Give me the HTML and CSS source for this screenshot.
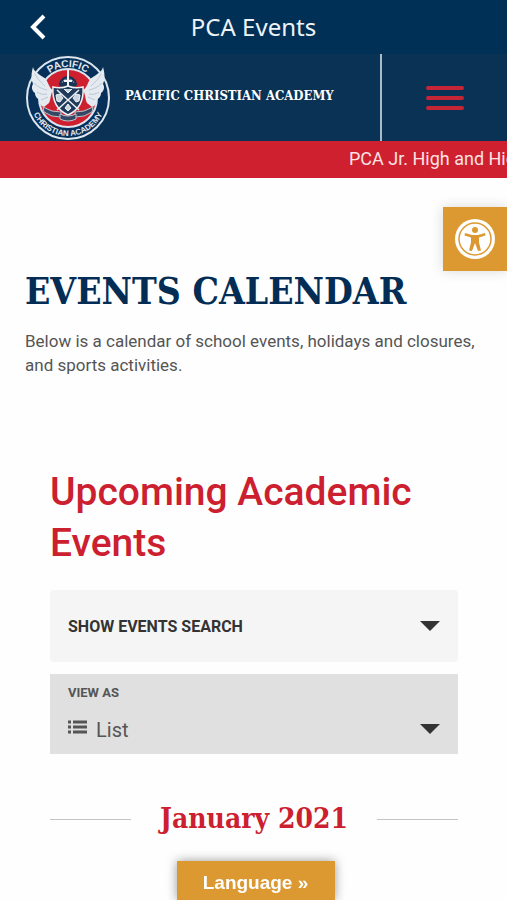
FILE: index.html
```html
<!DOCTYPE html>
<html lang="en">
<head>
  <meta charset="UTF-8">
  <title>PCA Events</title>
  <meta name="viewport" content="width=device-width, initial-scale=1.0">
  <link rel="stylesheet" href="styles.css">
</head>
<body>
  <div class="app-bar">
    <button class="back" type="button" aria-label="Back">
      <svg width="16" height="26" viewBox="0 0 16 26"><path d="M14 2 3 13l11 11" fill="none" stroke="#fff" stroke-width="4"/></svg>
    </button>
    <div class="app-title">PCA Events</div>
  </div>

  <header class="site-header">
    <a class="brand" href="#">
      <svg class="logo" viewBox="0 0 84 84" aria-hidden="true">
        <defs>
          <path id="arc-top" d="M11 42a31 31 0 0 1 62 0"/>
          <path id="arc-bottom" d="M4 42a38 38 0 0 0 76 0"/>
        </defs>
        <circle cx="42" cy="42" r="41" fill="#06305a" stroke="#dce6ef" stroke-width="2"/>
        <circle cx="42" cy="42" r="29" fill="#cf202f" stroke="#dce6ef" stroke-width="2"/>
        <text class="logo-text"><textPath href="#arc-top" startOffset="50%">PACIFIC</textPath></text>
        <text class="logo-text small"><textPath href="#arc-bottom" startOffset="50%">CHRISTIAN ACADEMY</textPath></text>
        <!-- wings -->
        <g id="wing">
          <path d="M7 11c-2 7-2 12 0 17-2 3-1 7 2 9 0 4 3 6 5 7-1 4 1 6 4 7l5-4c2-4 1-7 4-13-5-2-4-10-10-13C13 18 8 16 7 11Z" fill="#e4eaf0"/>
          <path d="M9 18c3 6 6 8 10 12M8 27c4 4 8 6 13 7M11 36c3 2 6 3 10 2M15 44l7-3" fill="none" stroke="#b9c8d6" stroke-width="1"/>
        </g>
        <use href="#wing" transform="matrix(-1 0 0 1 84 0)"/>
        <!-- helmet and sword -->
        <path d="M33 29c0-5 4-9 9-9s9 4 9 9l-3 3H36Z" fill="#183354"/>
        <path d="M36 27c1-3 3-4 6-4s5 1 6 4" fill="none" stroke="#8291a5" stroke-width="1"/>
        <path d="M42 14v18M38 25h8" stroke="#f2f5f8" stroke-width="2"/>
        <!-- shield -->
        <path d="M27 31q8 2 15-1 7 3 15 1c1 13-4 23-15 28-11-5-16-15-15-28Z" fill="#213b5c" stroke="#eef2f5" stroke-width="1.500"/>
        <path d="m31 34 22 20M53 34 31 54" stroke="#eef2f5" stroke-width="1.500"/>
        <path d="m38 33 4 4 4-4M30 39l4-1 3 4-3 4-3-1ZM54 39l-4-1-3 4 3 4 3-1ZM39 52l3-4 3 4-3 3Z" fill="#cbd5df" stroke="#eef2f5"/>
        <!-- ribbon -->
        <path d="m17 51 9 4 9 1v5l-9-1-8-4ZM67 51l-9 4-9 1v5l9-1 8-4Z" fill="#344863" stroke="#b9c5d1" stroke-width="1"/>
        <path d="M34 58q8 4 16 0v5q-8 4-16 0Z" fill="#344863" stroke="#b9c5d1" stroke-width="1"/>
      </svg>
      <span class="brand-name">PACIFIC CHRISTIAN ACADEMY</span>
    </a>
    <button class="menu" type="button" aria-label="Menu">
      <svg width="38" height="26" viewBox="0 0 38 26"><path d="M2 3h34M2 13h34M2 23h34" stroke="#c52535" stroke-width="4" stroke-linecap="round"/></svg>
    </button>
  </header>

  <div class="ticker">PCA Jr. High and High School</div>

  <main>
    <h1>EVENTS CALENDAR</h1>
    <p class="intro">Below is a calendar of school events, holidays and closures, and sports activities.</p>

    <section class="events">
      <h2>Upcoming Academic Events</h2>

      <button class="search-toggle" type="button">
        <span>SHOW EVENTS SEARCH</span>
        <span class="caret"></span>
      </button>

      <div class="view-box">
        <label for="view">VIEW AS</label>
        <div class="view-row">
          <svg width="20" height="18" viewBox="0 0 20 18"><path d="M0 2h3M0 7h3M0 12h3M5 2h14M5 7h14M5 12h14" stroke="#555" stroke-width="3"/></svg>
          <select id="view">
            <option>List</option>
            <option>Month</option>
            <option>Day</option>
          </select>
          <span class="caret"></span>
        </div>
      </div>

      <h3 class="month">January 2021</h3>
    </section>
  </main>

  <button class="accessibility" type="button" aria-label="Accessibility tools">
    <svg width="40" height="40" viewBox="0 0 40 40">
      <circle cx="20" cy="20" r="20" fill="#fff"/>
      <circle cx="20" cy="20" r="16" fill="none" stroke="#dc9932" stroke-width="1.500"/>
      <circle cx="20" cy="11" r="3" fill="#dc9932"/>
      <path d="m10 14 7 2h6l7-2 .5 2.500-6.500 2v5l2 8-3 .5-3-8-3 8-3-.5 2-8v-5l-6.500-2Z" fill="#dc9932"/>
    </svg>
  </button>
  <button class="language" type="button">Language »</button>
</body>
</html>
```
FILE: styles.css
```css
* {
  box-sizing: border-box;
}
body {
  margin: 0;
  background: #fefefe;
  color: #555;
  font-family: Roboto, sans-serif;
  overflow-x: hidden;
}
button {
  border: none;
  padding: 0;
  background: none;
  font-family: inherit;
  cursor: pointer;
}
svg {
  display: block;
}

/* top bars */
.app-bar {
  display: grid;
  grid-template-columns: 76px 1fr 76px;
  align-items: center;
  height: 54px;
  background: #013056;
}
.back {
  justify-self: center;
}
.app-title {
  padding-bottom: 2px;
  color: #eef3f8;
  font-family: "Noto Sans", sans-serif;
  font-size: 24px;
  text-align: center;
}
.site-header {
  display: flex;
  height: 87px;
  background: #0a3254;
}
.brand {
  flex: 1;
  display: flex;
  align-items: center;
  gap: 15px;
  padding-left: 26px;
  color: #fff;
  text-decoration: none;
}
.logo {
  width: 84px;
  height: 84px;
}
.logo-text {
  fill: #e4eaf0;
  font-family: "Liberation Sans", sans-serif;
  font-size: 10px;
  font-weight: bold;
  text-anchor: middle;
}
.logo-text.small {
  font-size: 8px;
}
.brand-name {
  padding-bottom: 4px;
  font-family: "Roboto Slab", "DejaVu Serif Condensed", "DejaVu Serif", serif;
  font-size: 13px;
  font-weight: bold;
  white-space: nowrap;
}
.menu {
  display: flex;
  align-items: center;
  justify-content: center;
  width: 127px;
  border-left: 2px solid #a9bac9;
}
.ticker {
  height: 37px;
  padding-left: 349px;
  overflow: hidden;
  background: #cf202f;
  color: #fbe3e5;
  font-size: 18px;
  line-height: 36px;
  white-space: nowrap;
}

/* content */
main {
  padding: 88px 25px 0;
}
h1 {
  margin: 0;
  color: #032d55;
  font-family: "Roboto Slab", "DejaVu Serif Condensed", "DejaVu Serif", serif;
  font-size: 37px;
  line-height: 50px;
  white-space: nowrap;
}
.intro {
  margin: 13px 0 0;
  font-size: 17px;
  line-height: 24px;
}
.events {
  padding: 90px 24px 0 25px;
}
h2 {
  margin: 0;
  color: #cc1f30;
  font-size: 39px;
  font-weight: 500;
  line-height: 51px;
}
.caret {
  border: 10px solid transparent;
  border-top-color: #333;
  border-bottom: none;
}
.search-toggle {
  display: flex;
  align-items: center;
  justify-content: space-between;
  width: 100%;
  height: 72px;
  margin-top: 21px;
  padding: 0 18px;
  border-radius: 4px;
  background: #f5f5f5;
  color: #333;
  font-size: 16px;
  font-weight: bold;
}
.view-box {
  margin-top: 12px;
  padding: 10px 18px;
  background: #e0e0e0;
}
.view-box label {
  display: block;
  font-size: 13px;
  font-weight: bold;
  line-height: 18px;
}
.view-row {
  display: flex;
  align-items: center;
  margin-top: 12px;
}
.view-row select {
  flex: 1;
  height: 30px;
  margin-left: 8px;
  padding: 2px 0 0;
  border: none;
  background: none;
  color: #555;
  font-family: inherit;
  font-size: 20px;
  appearance: none;
}
.month {
  display: flex;
  align-items: center;
  gap: 29px;
  margin: 47px 0 60px;
  color: #cc1f30;
  font-family: "Roboto Slab", "DejaVu Serif Condensed", "DejaVu Serif", serif;
  font-size: 28px;
  line-height: 36px;
  white-space: nowrap;
}
.month::before,
.month::after {
  content: "";
  flex: 1;
  height: 1px;
  background: #c4c4c4;
}

/* floating buttons */
.accessibility {
  position: fixed;
  top: 207px;
  right: 0;
  display: flex;
  align-items: center;
  justify-content: center;
  width: 64px;
  height: 64px;
  background: #dc9932;
  box-shadow: 0 0 12px rgba(0, 0, 0, 0.15);
}
.language {
  position: fixed;
  bottom: 0;
  left: 50%;
  width: 158px;
  height: 39px;
  margin-left: -77px;
  padding-top: 4px;
  background: #dc9932;
  box-shadow: 0 0 10px rgba(0, 0, 0, 0.4);
  color: #fff;
  font-family: "Liberation Sans", sans-serif;
  font-size: 19px;
  font-weight: bold;
}
```
